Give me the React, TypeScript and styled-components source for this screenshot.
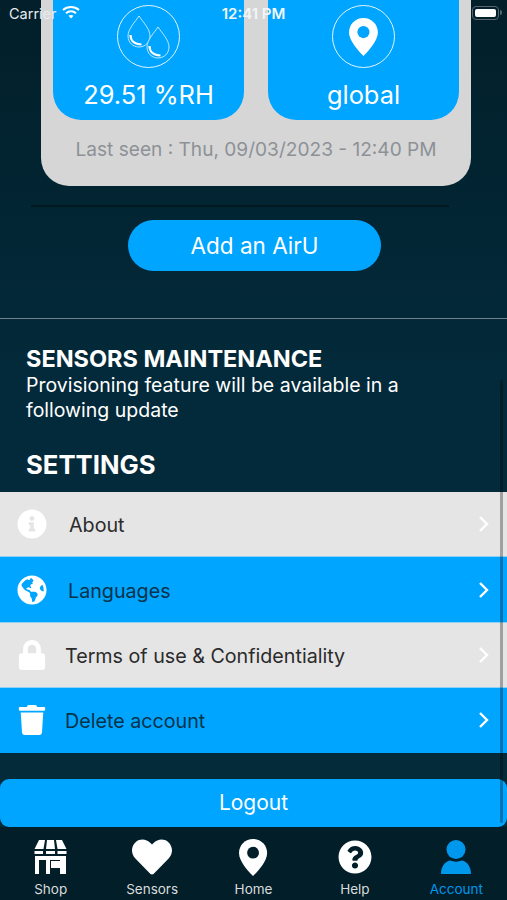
import React from 'react';
import styled, { createGlobalStyle } from 'styled-components';
import { FaGlobeAmericas, FaInfoCircle, FaLock, FaQuestionCircle, FaTrash, FaHeart } from 'react-icons/fa';

const blue = '#00a5ff';

const GlobalStyle = createGlobalStyle`
  html, body {
    margin: 0;
    padding: 0;
    background: #02202b;
    font-family: Inter, "Liberation Sans", sans-serif;
  }
`;

const Screen = styled.div`
  position: relative;
  display: flex;
  flex-direction: column;
  width: 507px;
  height: 900px;
  overflow: hidden;
`;

const Scroller = styled.div`
  display: flex;
  flex-direction: column;
  flex: 1;
  min-height: 0;
  background: linear-gradient(180deg, #021f2a 0%, #032a3a 45%, #032b3a 100%);
`;

const Card = styled.div`
  display: flex;
  flex-direction: column;
  align-items: center;
  width: 430px;
  height: 226px;
  margin: -40px 0 0 41px;
  background: #d6d6d6;
  border-radius: 0 0 28px 28px;
  box-sizing: border-box;
`;

const Tiles = styled.div`
  display: flex;
  gap: 24px;
`;

const Tile = styled.div`
  display: flex;
  flex-direction: column;
  align-items: center;
  width: 191px;
  height: 160px;
  padding-top: 45px;
  box-sizing: border-box;
  background: ${blue};
  border-radius: 0 0 28px 28px;
`;

const IconRing = styled.div`
  display: flex;
  align-items: center;
  justify-content: center;
  width: 63px;
  height: 63px;
  border: 1.5px solid #e4f5ff;
  border-radius: 50%;
  box-sizing: border-box;
  color: #fff;
`;

const TileValue = styled.div`
  margin-top: 11px;
  font-size: 25.4px;
  line-height: 32px;
  color: #fff;
`;

const LastSeen = styled.div`
  margin-top: 17px;
  font-size: 19.1px;
  line-height: 24px;
  color: #8d9196;
`;

const Divider = styled.div`
  width: 418px;
  height: 2px;
  margin: 19px 0 0 31px;
  background: #011820;
`;

const AddButton = styled.div`
  display: flex;
  align-items: center;
  justify-content: center;
  width: 253px;
  height: 51px;
  margin: 13px 0 0 128px;
  border-radius: 26px;
  background: ${blue};
  color: #fff;
  font-size: 22.5px;
`;

const Separator = styled.div`
  height: 1px;
  margin-top: 47px;
  background: #6d818a;
`;

const Section = styled.div`
  display: flex;
  flex-direction: column;
  padding: 26px 26px 0;
  color: #fff;
`;

const SectionTitle = styled.div`
  font-size: 23.5px;
  line-height: 28px;
  font-weight: 700;
`;

const SectionText = styled.div`
  font-size: 19.5px;
  line-height: 25px;
`;

const SettingsTitle = styled(SectionTitle)`
  margin-top: 28px;
  font-size: 25.7px;
`;

const Rows = styled.div`
  display: flex;
  flex-direction: column;
  gap: 1px;
  margin-top: 13px;
  background: #8fd0f5;
`;

const Row = styled.div<{ $blue?: boolean }>`
  display: flex;
  align-items: center;
  height: 64.4px;
  padding-top: 2px;
  box-sizing: border-box;
  background: ${({ $blue }) => ($blue ? blue : '#e5e5e5')};
  color: ${({ $blue }) => ($blue ? '#06334a' : '#2b2b2b')};
  font-size: 19.7px;
`;

const RowIcon = styled.div`
  display: flex;
  align-items: center;
  justify-content: center;
  width: 32px;
  margin: -2px 0 0 16px;
  color: #fff;
  font-size: 30px;
`;

const RowLabel = styled.div<{ $indent: number }>`
  flex: 1;
  margin-left: ${({ $indent }) => $indent}px;
`;

const RowChevron = styled.svg`
  margin: -2px 18px 0 0;
`;

const Logout = styled.div`
  display: flex;
  align-items: center;
  justify-content: center;
  height: 48px;
  margin-top: 26.400px;
  border-radius: 9px;
  background: ${blue};
  color: #fff;
  font-size: 21px;
`;

const TabBar = styled.div`
  display: flex;
  height: 73px;
  background: #021e28;
`;

const Tab = styled.div<{ $active?: boolean }>`
  flex: 1;
  display: flex;
  flex-direction: column;
  align-items: center;
  color: ${({ $active }) => ($active ? '#0098ec' : '#fff')};
`;

const TabIcon = styled.div`
  display: flex;
  align-items: center;
  justify-content: center;
  height: 38px;
  margin-top: 11px;
`;

const TabLabel = styled.div<{ $active?: boolean }>`
  margin-top: 4px;
  font-size: 13.5px;
  line-height: 18px;
  color: ${({ $active }) => ($active ? '#0098ec' : '#d8dcde')};
`;

const StatusBar = styled.div`
  position: absolute;
  top: 0;
  left: 0;
  right: 0;
  height: 28px;
  color: #fff;
`;

const Carrier = styled.div`
  position: absolute;
  left: 9px;
  top: 6px;
  font-size: 14.5px;
  line-height: 16px;
  color: #e8ecee;
`;

const Wifi = styled.svg`
  position: absolute;
  left: 62px;
  top: 5px;
`;

const Clock = styled.div`
  position: absolute;
  left: 0;
  right: 0;
  top: 6px;
  text-align: center;
  font-size: 15px;
  line-height: 16px;
  font-weight: 600;
  color: #f2f6f8;
`;

const Battery = styled.div`
  position: absolute;
  left: 472px;
  top: 6px;
  width: 27px;
  height: 14px;
  padding: 2px;
  border: 1.5px solid #59666c;
  border-radius: 4px;
  box-sizing: border-box;

  &::before {
    content: '';
    display: block;
    height: 100%;
    border-radius: 2px;
    background: #fff;
  }

  &::after {
    content: '';
    position: absolute;
    right: -4px;
    top: 3px;
    width: 2px;
    height: 5px;
    background: #59666c;
    border-radius: 0 2px 2px 0;
  }
`;

const ScrollThumb = styled.div`
  position: absolute;
  left: 500px;
  top: 380px;
  width: 3px;
  height: 443px;
  border-radius: 2px;
  background: rgba(0, 0, 0, 0.3);
`;

const Pin = ({ size, hole }: { size: number; hole: string }) => (
  <svg width={size * 0.76} height={size} viewBox="0 0 38 50">
    <path
      fill="currentColor"
      d="M19 0C8.500 0 0 8.300 0 18.800 0 30 12 43 19 50c7-7 19-20 19-31.200C38 8.300 29.500 0 19 0z"
    />
    <circle cx="19" cy="18.500" r="8" fill={hole} />
  </svg>
);

const Drops = () => (
  <svg width="50" height="44" viewBox="0 0 50 44" fill="none">
    <path d="M15 1C11 7 4 14 4 21c0 6.500 5 11 11 11s11-4.500 11-11C26 14 19 7 15 1z" stroke="#bfe8ff" strokeWidth="1" />
    <path d="M6.500 20c0 6 4.500 9.500 11 9.500" stroke="#fff" strokeWidth="2.200" />
    <path d="M34 12c-4 6-11 13-11 20 0 6.500 5 11 11 11s11-4.500 11-11c0-7-7-14-11-20z" stroke="#bfe8ff" strokeWidth="1" fill={blue} />
    <path d="M25.500 31c0 6 4.500 9.500 11 9.500" stroke="#fff" strokeWidth="2.200" />
  </svg>
);

const Shop = () => (
  <svg width="33" height="35" viewBox="0 0 33 35" fill="currentColor">
    <path d="M5 0h6l-1.500 9H0.500zM13 0h7l1 9H12zM22 0h6l4.500 9H23.500z" />
    <path d="M0.500 11h8.500v3H0.500zM12 11h9v3h-9zM23.500 11h9v3h-9z" />
    <path d="M1 16h31v18H26V20H16v14H1zM5 20v14h7V20zM17 21h9v7h-9z" fillRule="evenodd" />
  </svg>
);

const User = () => (
  <svg width="30" height="34" viewBox="0 0 30 34" fill="currentColor">
    <circle cx="15" cy="9.500" r="9.500" />
    <path d="M0 34c0-7.500 4-12.500 9-13.500 3.500 1.500 8.500 1.500 12 0 5 1 9 6 9 13.500z" />
  </svg>
);

const Chevron = () => (
  <RowChevron width="11" height="18" viewBox="0 0 11 18" fill="none" stroke="#fff" strokeWidth="2.400">
    <path d="M2 2l7 7-7 7" />
  </RowChevron>
);

const settings = [
  { label: 'About', icon: <FaInfoCircle />, indent: 21 },
  { label: 'Languages', icon: <FaGlobeAmericas />, indent: 20, blue: true },
  { label: 'Terms of use & Confidentiality', icon: <FaLock />, indent: 17 },
  { label: 'Delete account', icon: <FaTrash />, indent: 17, blue: true },
];

export default function App() {
  return (
    <Screen>
      <GlobalStyle />
      <Scroller>
        <Card>
          <Tiles>
            <Tile>
              <IconRing>
                <Drops />
              </IconRing>
              <TileValue>29.51 %RH</TileValue>
            </Tile>
            <Tile>
              <IconRing>
                <Pin size={38} hole={blue} />
              </IconRing>
              <TileValue>global</TileValue>
            </Tile>
          </Tiles>
          <LastSeen>Last seen : Thu, 09/03/2023 - 12:40 PM</LastSeen>
        </Card>
        <Divider />
        <AddButton>Add an AirU</AddButton>
        <Separator />
        <Section>
          <SectionTitle>SENSORS MAINTENANCE</SectionTitle>
          <SectionText>
            Provisioning feature will be available in a
            <br />
            following update
          </SectionText>
          <SettingsTitle>SETTINGS</SettingsTitle>
        </Section>
        <Rows>
          {settings.map((s) => (
            <Row key={s.label} $blue={s.blue}>
              <RowIcon>{s.icon}</RowIcon>
              <RowLabel $indent={s.indent}>{s.label}</RowLabel>
              <Chevron />
            </Row>
          ))}
        </Rows>
        <Logout>Logout</Logout>
      </Scroller>
      <TabBar>
        <Tab>
          <TabIcon>
            <Shop />
          </TabIcon>
          <TabLabel>Shop</TabLabel>
        </Tab>
        <Tab>
          <TabIcon>
            <FaHeart size={40} />
          </TabIcon>
          <TabLabel>Sensors</TabLabel>
        </Tab>
        <Tab>
          <TabIcon>
            <Pin size={37} hole="#021e28" />
          </TabIcon>
          <TabLabel>Home</TabLabel>
        </Tab>
        <Tab>
          <TabIcon>
            <FaQuestionCircle size={34} />
          </TabIcon>
          <TabLabel>Help</TabLabel>
        </Tab>
        <Tab $active>
          <TabIcon>
            <User />
          </TabIcon>
          <TabLabel $active>Account</TabLabel>
        </Tab>
      </TabBar>
      <StatusBar>
        <Carrier>Carrier</Carrier>
        <Wifi width="18" height="14" viewBox="0 0 18 14" fill="none" stroke="#fff" strokeWidth="2">
          <path d="M1 5c4.500-4 11.500-4 16 0" />
          <path d="M4 8.200c2.800-2.500 7.200-2.500 10 0" />
          <path d="M9 13.500L6.500 10.800c1.500-1 3.500-1 5 0z" fill="#fff" stroke="none" />
        </Wifi>
        <Clock>12:41 PM</Clock>
        <Battery />
      </StatusBar>
      <ScrollThumb />
    </Screen>
  );
}
